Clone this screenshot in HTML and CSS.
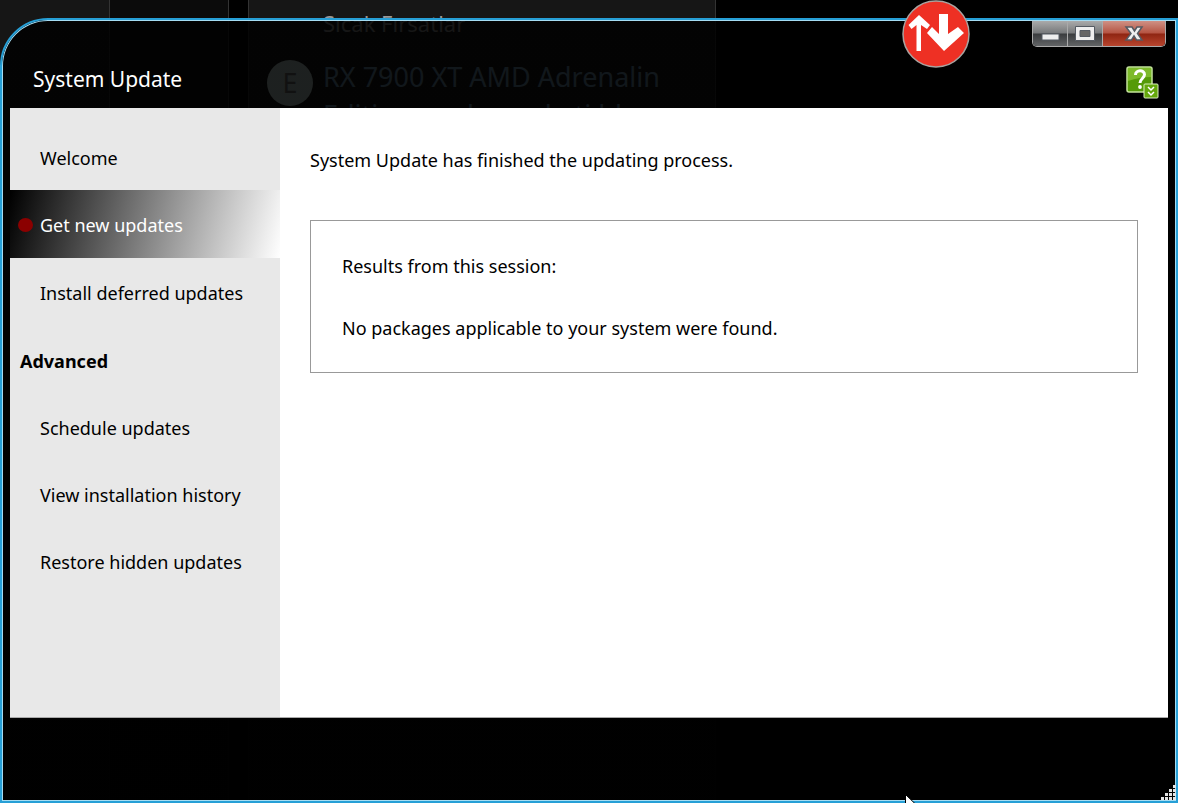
FILE: index.html
```html
<!DOCTYPE html>
<html lang="en">
<head>
    <meta charset="UTF-8">
    <meta name="viewport" content="width=device-width, initial-scale=1.0">
    <title>System Update</title>
    <link rel="stylesheet" href="styles.css">
</head>
<body>
    <!-- Page behind the window -->
    <div class="desktop">
        <div class="pane"></div>
        <div class="pane pane-dim"></div>
        <div class="pane-gap"></div>
        <div class="pane pane-topic">
            <div class="topic-forum">Sıcak Fırsatlar</div>
            <div class="topic-avatar">E</div>
            <div class="topic-title">RX 7900 XT AMD Adrenalin<br>Edition yazılım paketi hk.</div>
        </div>
    </div>

    <div class="window">
        <header class="titlebar">
            <h1>System Update</h1>
            <svg class="logo" width="68" height="68" viewBox="0 0 68 68">
                <circle cx="34" cy="34" r="33" fill="#ee3024" stroke="#a9a3a0" stroke-width="1.5"/>
                <path d="M14.500 51V25l-5 4-3-4L17 15l11 10-3 4-6-4v26z" fill="#fff"/>
                <path d="M37 14h9v20l10-7 6 6-20 18-17-18 5-6 7 7z" fill="#fff"/>
            </svg>
            <div class="tools">
                <div class="controls">
                    <button type="button" class="control" aria-label="Minimize">
                        <svg width="34" height="25" viewBox="0 0 34 25"><rect x="9" y="13" width="17" height="6" fill="#eee" stroke="#555a62"/></svg>
                    </button>
                    <button type="button" class="control" aria-label="Maximize">
                        <svg width="34" height="25" viewBox="0 0 34 25"><path d="M7.500 5.500h19v14h-19z" fill="#eee" stroke="#555a62"/><path d="M12 9.500h10v6H12z" fill="#666" stroke="#555a62"/></svg>
                    </button>
                    <button type="button" class="control control-close" aria-label="Close">
                        <svg width="62" height="25" viewBox="0 0 62 25"><path d="M23 6h6l2.500 4L34 6h5l-4.500 6.500L39 19h-5.500l-2.500-4-2.500 4H23l5-6.500z" fill="#eee" stroke="#555a62" stroke-width="1.500"/></svg>
                    </button>
                </div>
                <button type="button" class="help" aria-label="Help">
                    <svg width="33" height="33" viewBox="0 0 33 33">
                        <rect x="1" y="1" width="25" height="25" rx="2" fill="#559a08" stroke="#c3e39a" stroke-width="1.500"/>
                        <path d="M2 2h23v9Q14 11 2 15z" fill="#7dba2a"/>
                        <path d="M9.500 9c0-5.500 9-5.500 9-.5 0 4-4.500 4-4.500 8.500" fill="none" stroke="#fff" stroke-width="3"/>
                        <circle cx="14" cy="21" r="1.900" fill="#fff"/>
                        <rect x="18" y="18" width="14" height="14" rx="1" fill="#65a80c" stroke="#dcefc0"/>
                        <path d="M22 21l3 3 3-3M22 26l3 3 3-3" fill="none" stroke="#fff" stroke-width="1.500"/>
                    </svg>
                </button>
            </div>
        </header>

        <div class="content">
            <nav class="sidebar">
                <a class="item" href="#">Welcome</a>
                <a class="item selected" href="#">Get new updates</a>
                <a class="item" href="#">Install deferred updates</a>
                <h2>Advanced</h2>
                <a class="item" href="#">Schedule updates</a>
                <a class="item" href="#">View installation history</a>
                <a class="item" href="#">Restore hidden updates</a>
            </nav>
            <main class="main">
                <p>System Update has finished the updating process.</p>
                <div class="results">
                    <p>Results from this session:</p>
                    <p>No packages applicable to your system were found.</p>
                </div>
            </main>
        </div>

        <svg class="grip" width="16" height="16" viewBox="0 0 16 16" fill="#e4e4e4">
            <path d="M13 0h3v3h-3zM9 4h3v3H9zM13 4h3v3h-3zM5 8h3v3H5zM9 8h3v3H9zM13 8h3v3h-3zM1 12h3v3H1zM5 12h3v3H5zM9 12h3v3H9zM13 12h3v3h-3z"/>
        </svg>
    </div>

    <svg class="cursor" width="12" height="19" viewBox="0 0 12 19">
        <path d="M.5.5v16l4-4 2.500 6 2.500-1-2.500-6h5z" fill="#fff" stroke="#000"/>
    </svg>
</body>
</html>
```
FILE: styles.css
```css
* {
    box-sizing: border-box;
}
body {
    margin: 0;
    height: 100vh;
    padding-top: 18px;
    display: flex;
    position: relative;
    overflow: hidden;
    background: #000;
    font-family: "Noto Sans", sans-serif;
    font-size: 18px;
    line-height: 24px;
    color: #000;
}
h1, h2, p {
    margin: 0;
}
button {
    padding: 0;
    border: none;
    background: none;
    cursor: pointer;
}
svg {
    display: block;
}

/* Page behind the window */
.desktop {
    position: absolute;
    inset: 0;
    display: grid;
    grid-template-columns: 110px 119px 19px 468px;
}
.pane {
    background: #161616;
    border-right: 1px solid #333;
}
.pane-dim {
    background: #0b0b0b;
}
.pane-topic {
    border-left: 1px solid #333;
    padding: 8px 0 0 18px;
    display: grid;
    grid-template-columns: 46px 1fr;
    grid-template-rows: 30px auto;
    align-content: start;
    column-gap: 10px;
    row-gap: 20px;
    white-space: nowrap;
}
.topic-forum {
    grid-column: 2;
    font-size: 22px;
    line-height: 30px;
    color: #999;
}
.topic-avatar {
    width: 46px;
    height: 46px;
    margin-top: 2px;
    border-radius: 50%;
    background: #cfe6e0;
    color: #777;
    font-size: 27px;
    line-height: 46px;
    text-align: center;
}
.topic-title {
    font-size: 27px;
    line-height: 38px;
    color: #78a0c0;
}

/* Window frame */
.window {
    flex: 1;
    position: relative;
    display: flex;
    flex-direction: column;
    padding: 0 8px 83px;
    border: 2px solid #269fd6;
    border-top-left-radius: 48px;
    background: linear-gradient(rgba(0, 0, 0, 0.86) 100px, rgba(0, 0, 0, 0.98) 600px);
    box-shadow: inset 0 0 0 1px #a5dcf2;
}
.titlebar {
    height: 88px;
    display: flex;
    align-items: flex-start;
}
.titlebar h1 {
    flex: 1;
    padding: 45px 0 0 23px;
    font-size: 21px;
    line-height: 28px;
    font-weight: normal;
    color: #fff;
}
.logo {
    margin: -20px 62px 0 0;
}
.tools {
    display: flex;
    flex-direction: column;
    align-items: flex-end;
    gap: 19px;
    padding: 1px 2px 0 0;
}
.controls {
    display: flex;
    border: 1px solid #aaa;
    border-top: none;
    border-radius: 0 0 5px 5px;
    overflow: hidden;
}
.control {
    background: linear-gradient(#aaa, #77797b 48%, #3a3c3e 52%, #626466);
    border-right: 1px solid #aaa;
}
.control-close {
    border-right: none;
    background: linear-gradient(#cf9185, #b55443 48%, #8f2512 52%, #b8452e);
}
.help {
    margin-right: 7px;
}

/* Content */
.content {
    flex: 1;
    display: grid;
    grid-template-columns: 270px 1fr;
    border-bottom: 1px solid #aaa;
    background: #fff;
}
.sidebar {
    padding-top: 15px;
    background: #e8e8e8;
}
.item {
    display: flex;
    align-items: center;
    height: 67px;
    padding: 2px 0 0 30px;
    position: relative;
    color: #000;
    text-decoration: none;
}
.selected {
    height: 68px;
    background: linear-gradient(105deg, #000, #fff);
    color: #fff;
}
.selected::before {
    content: "";
    position: absolute;
    left: 8px;
    width: 15px;
    height: 14px;
    border-radius: 50%;
    background: #8b0000;
}
.sidebar h2 {
    height: 68px;
    padding: 2px 0 0 10px;
    font-size: 18px;
    line-height: 68px;
}
.main {
    padding: 40px 30px;
}
.results {
    display: flex;
    flex-direction: column;
    gap: 38px;
    margin-top: 48px;
    padding: 33px 31px 32px;
    border: 1px solid #999;
}

.grip {
    position: absolute;
    right: 0;
    bottom: 0;
}
.cursor {
    position: absolute;
    left: 905px;
    top: 794px;
}
```
